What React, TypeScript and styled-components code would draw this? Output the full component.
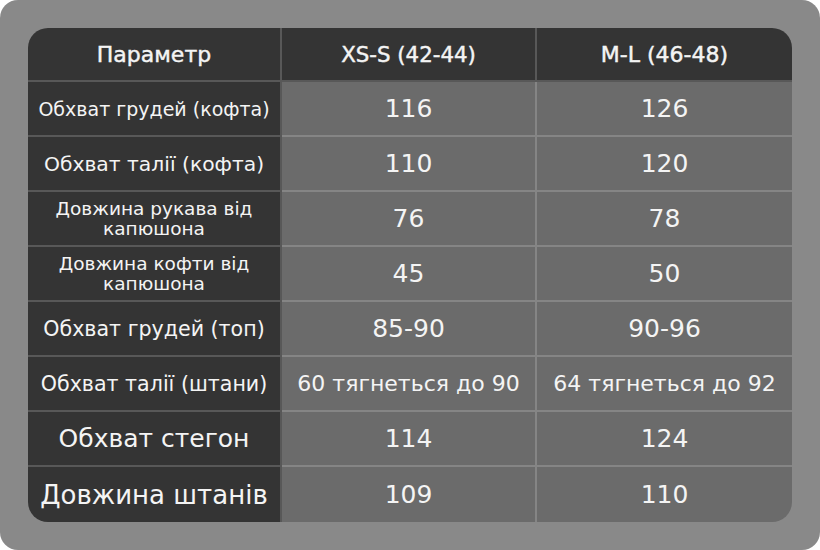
import React from "react";
import styled, { createGlobalStyle } from "styled-components";

const GlobalStyle = createGlobalStyle`
  html, body {
    margin: 0;
    padding: 0;
    background: #ffffff;
  }
  body {
    font-family: "DejaVu Sans", "Liberation Sans", sans-serif;
  }
`;

const Frame = styled.div`
  width: 820px;
  height: 550px;
  box-sizing: border-box;
  padding: 28px;
  background: #898989;
  border-radius: 18px;
`;

const Table = styled.div`
  display: grid;
  grid-template-columns: 254px 255px 255px;
  grid-template-rows: 54px repeat(8, 55px);
  width: 764px;
  height: 494px;
  border-radius: 20px;
  overflow: hidden;
  color: #f4f4f4;
`;

const Cell = styled.div<{ $dark?: boolean; $size: number; $last?: boolean; $lastCol?: boolean }>`
  display: flex;
  align-items: center;
  justify-content: center;
  text-align: center;
  box-sizing: border-box;
  background: ${({ $dark }) => ($dark ? "#343434" : "#6b6b6b")};
  border-bottom: ${({ $last }) => ($last ? "none" : "2px solid rgba(255, 255, 255, 0.18)")};
  border-right: ${({ $lastCol }) => ($lastCol ? "none" : "2px solid rgba(255, 255, 255, 0.18)")};
  font-size: ${({ $size }) => $size}px;
  line-height: 20px;
  white-space: pre-line;
  padding: 0 4px;
`;

const HeadCell = styled(Cell)`
  font-weight: 400;
  -webkit-text-stroke: 0.45px #f4f4f4;
  padding-top: 2px;
`;

type Row = { label: string; a: string; b: string; labelSize: number; valueSize: number };

const rows: Row[] = [
  { label: "Обхват грудей (кофта)", a: "116", b: "126", labelSize: 19, valueSize: 25 },
  { label: "Обхват талії (кофта)", a: "110", b: "120", labelSize: 20.3, valueSize: 25 },
  { label: "Довжина рукава від\nкапюшона", a: "76", b: "78", labelSize: 18.5, valueSize: 25 },
  { label: "Довжина кофти від\nкапюшона", a: "45", b: "50", labelSize: 18.5, valueSize: 25 },
  { label: "Обхват грудей (топ)", a: "85-90", b: "90-96", labelSize: 20.6, valueSize: 25 },
  { label: "Обхват талії (штани)", a: "60 тягнеться до 90", b: "64 тягнеться до 92", labelSize: 20.6, valueSize: 22 },
  { label: "Обхват стегон", a: "114", b: "124", labelSize: 25, valueSize: 25 },
  { label: "Довжина штанів", a: "109", b: "110", labelSize: 26, valueSize: 25 },
];

export default function App() {
  return (
    <>
      <GlobalStyle />
      <Frame>
        <Table>
          <HeadCell $dark $size={22}>Параметр</HeadCell>
          <HeadCell $dark $size={21.3}>XS-S (42-44)</HeadCell>
          <HeadCell $dark $lastCol $size={22}>M-L (46-48)</HeadCell>
          {rows.map((r, i) => {
            const last = i === rows.length - 1;
            return (
              <React.Fragment key={r.label}>
                <Cell $dark $last={last} $size={r.labelSize}>{r.label}</Cell>
                <Cell $last={last} $size={r.valueSize}>{r.a}</Cell>
                <Cell $last={last} $lastCol $size={r.valueSize}>{r.b}</Cell>
              </React.Fragment>
            );
          })}
        </Table>
      </Frame>
    </>
  );
}
